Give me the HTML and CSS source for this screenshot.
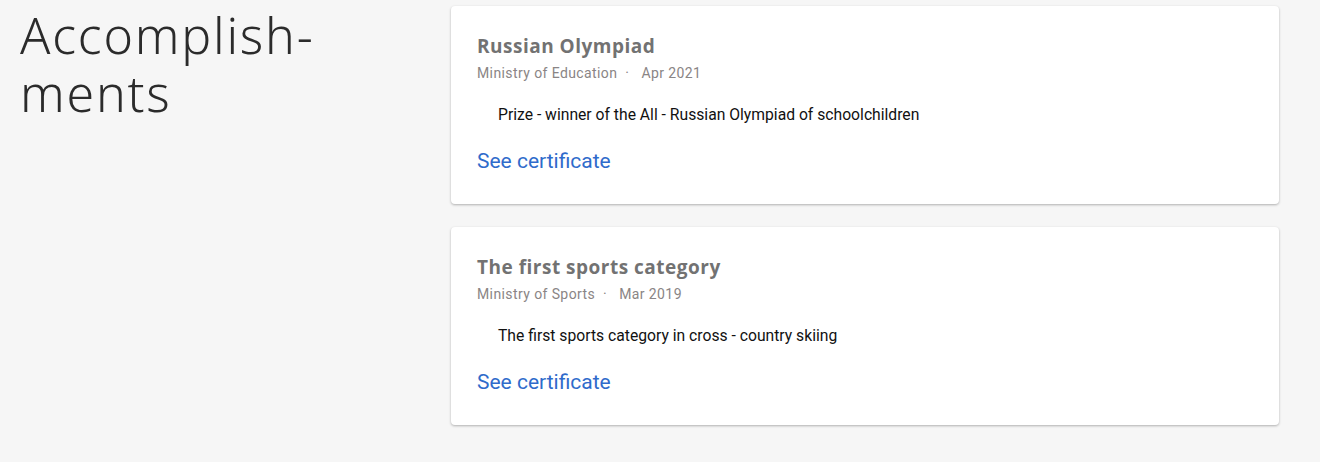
FILE: index.html
```html
<!DOCTYPE html>
<html lang="en">
<head>
<meta charset="utf-8">
<title>Accomplishments</title>
<link rel="stylesheet" href="styles.css">
</head>
<body>
<section class="section">
  <h1 class="section-title">Accomplish-<br>ments</h1>
  <div class="cards">
    <article class="card">
      <h2 class="card-title">Russian Olympiad</h2>
      <p class="card-meta"><span>Ministry of Education</span><span class="dot">·</span><span>Apr 2021</span></p>
      <p class="card-desc">Prize - winner of the All - Russian Olympiad of schoolchildren</p>
      <a class="card-link" href="#">See certificate</a>
    </article>
    <article class="card">
      <h2 class="card-title">The first sports category</h2>
      <p class="card-meta"><span>Ministry of Sports</span><span class="dot">·</span><span>Mar 2019</span></p>
      <p class="card-desc">The first sports category in cross - country skiing</p>
      <a class="card-link" href="#">See certificate</a>
    </article>
  </div>
</section>
</body>
</html>
```
FILE: styles.css
```css
* { box-sizing: border-box; }
html, body { margin: 0; padding: 0; }
body {
  background: #f6f6f6;
  font-family: Roboto, "Liberation Sans", sans-serif;
  width: 1320px;
  height: 462px;
  overflow: hidden;
}
.section {
  display: grid;
  grid-template-columns: 431px 828px;
  padding: 6px 0 0 20px;
}
.section-title {
  margin: 0;
  font-family: "Noto Sans", "Open Sans", sans-serif;
  font-weight: 300;
  font-size: 50px;
  line-height: 58px;
  color: #2b2b2b;
  letter-spacing: 1.8px;
}
.cards {
  display: flex;
  flex-direction: column;
  gap: 23px;
}
.card {
  background: #fff;
  border-radius: 4px;
  box-shadow: 0 1px 3px rgba(0,0,0,0.18), 0 1px 2px rgba(0,0,0,0.12);
  height: 198px;
  padding: 28px 26px 0 26px;
}
.card-title {
  margin: 0;
  font-family: "Open Sans", "Noto Sans", sans-serif;
  font-weight: 700;
  font-size: 19px;
  line-height: 24px;
  letter-spacing: 0.5px;
  color: #727272;
}
.card-meta {
  margin: 6px 0 0;
  font-size: 14px;
  line-height: 18px;
  letter-spacing: 0.4px;
  color: #8a8585;
  display: flex;
}
.card-meta .dot { margin: 0 12px 0 8px; }
.card-desc {
  margin: 23px 0 0 21px;
  font-size: 15.7px;
  line-height: 20px;
  color: #111;
}
.card-link {
  display: inline-block;
  margin-top: 24px;
  font-size: 21px;
  line-height: 24px;
  color: #2f6bcb;
  text-decoration: none;
}
```
